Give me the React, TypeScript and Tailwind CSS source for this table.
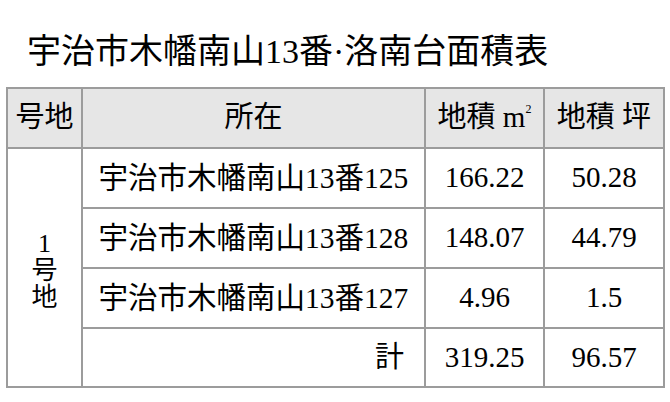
const rows = [
  { addr: "宇治市木幡南山13番125", m2: "166.22", tsubo: "50.28" },
  { addr: "宇治市木幡南山13番128", m2: "148.07", tsubo: "44.79" },
  { addr: "宇治市木幡南山13番127", m2: "4.96", tsubo: "1.5" },
];

const cell = "border-2 border-[#9c9c9c] text-center align-middle p-0";

export default function App() {
  return (
    <div
      className="w-[670px] h-[402px] bg-white px-[6px] pt-[31px] text-black"
      style={{ fontFamily: '"Liberation Serif", "Noto Sans CJK JP", serif' }}
    >
      <h1 className="pl-[21px] text-[34px] leading-[41px] font-normal mb-[15px]">
        宇治市木幡南山13番·洛南台面積表
      </h1>

      <table className="table-fixed border-collapse w-[657px] text-[29px]">
        <colgroup>
          <col className="w-[75px]" />
          <col className="w-[343px]" />
          <col className="w-[119px]" />
          <col className="w-[120px]" />
        </colgroup>
        <thead>
          <tr className="h-[60px] bg-[#e6e6e6]">
            <th className={`${cell} font-normal`}>号地</th>
            <th className={`${cell} font-normal`}>所在</th>
            <th className={`${cell} font-normal`}>
              地積 m<sup className="text-[12px] align-[8px]">2</sup>
            </th>
            <th className={`${cell} font-normal`}>地積 坪</th>
          </tr>
        </thead>
        <tbody>
          {rows.map((r, i) => (
            <tr key={r.addr} className="h-[60px]">
              {i === 0 && (
                <td rowSpan={4} className={`${cell} text-[26px] leading-[27px]`}>
                  <div className="flex flex-col items-center pt-[6px]">
                    <span>1</span>
                    <span>号</span>
                    <span>地</span>
                  </div>
                </td>
              )}
              <td className={`${cell} text-[29.5px]`}>{r.addr}</td>
              <td className={cell}>{r.m2}</td>
              <td className={cell}>{r.tsubo}</td>
            </tr>
          ))}
          <tr className="h-[59px]">
            <td className={`${cell} text-right pr-[20px]`}>計</td>
            <td className={cell}>319.25</td>
            <td className={cell}>96.57</td>
          </tr>
        </tbody>
      </table>
    </div>
  );
}
